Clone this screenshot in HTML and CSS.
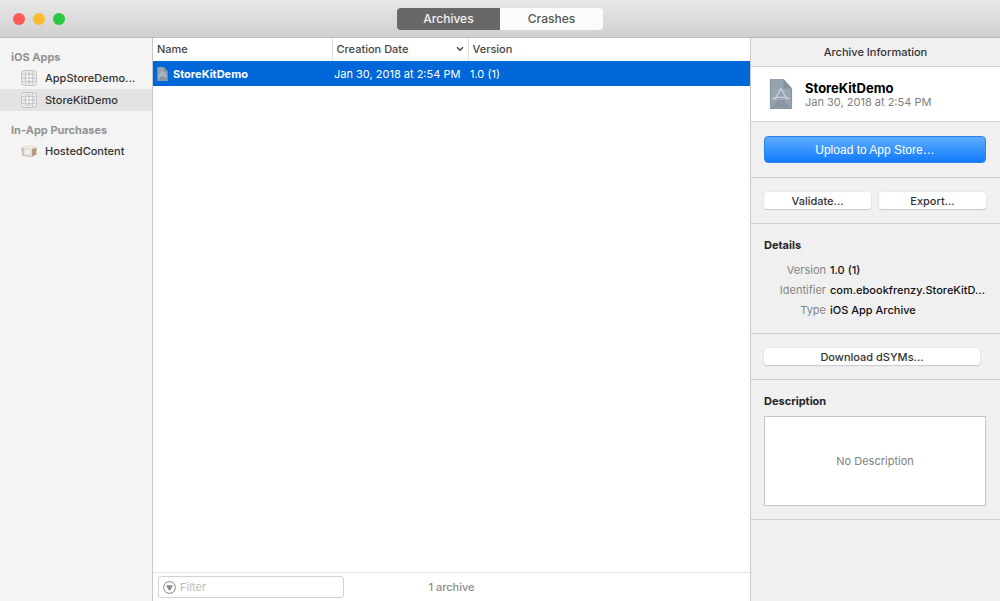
FILE: index.html
```html
<!DOCTYPE html>
<html lang="en">

<head>
    <meta charset="UTF-8">
    <meta name="viewport" content="width=device-width, initial-scale=1.0">
    <title>Archives</title>
    <link rel="stylesheet" href="styles.css">
</head>

<body>

    <!-- shared icons -->
    <svg class="icon-defs" width="0" height="0" aria-hidden="true">
        <symbol id="icon-app" viewBox="0 0 16 16">
            <rect x="0.5" y="0.5" width="15" height="15" rx="3" fill="#ececec" stroke="#c2c2c2" />
            <path d="M4.500 1.500v13M8 1.500v13M11.500 1.500v13M1.500 4.500h13M1.500 8h13M1.500 11.500h13" stroke="#bfbfbf" stroke-width="1" stroke-dasharray="2 0.700" />
            <circle cx="8" cy="8" r="4.500" fill="none" stroke="#cdcdcd" stroke-width="0.800" />
            <path d="M5.500 5.500h1.500v1.500H5.500zM9 5.500h1.500v1.500H9zM5.500 9h1.500v1.500H5.500zM9 9h1.500v1.500H9z" fill="#fafafa" />
        </symbol>
        <symbol id="icon-box" viewBox="0 0 16 12">
            <path d="M0.500 3 5 0.800h6l4.500 2L11 4z" fill="#f3ece3" stroke="#ddd2c6" stroke-width="0.500" />
            <path d="M0.500 3 11 4v7.700L1.500 10.500z" fill="#e6e1db" />
            <path d="M11 4l4.500-1.200V9.500L11 11.700z" fill="#b39c82" />
            <path d="M0.500 3 1.200 10.200l1.300.3V3.200z" fill="#c2b5a7" />
            <path d="M4.500 5.500h4v3.500h-4z" fill="#f6f5f2" />
            <path d="M1.500 10.500 11 11.700" stroke="#b8aa9b" stroke-width="0.700" />
        </symbol>
        <symbol id="icon-archive" viewBox="0 0 22 30">
            <path d="M0 0h13.500L22 9.500V30H0z" fill="#95a2af" />
            <path d="M13.500 0v9.500H22z" fill="#84919e" />
            <path d="M0.400 0v29.600h21.200V10" fill="none" stroke="#808d9a" stroke-width="0.800" />
            <path d="M3 18a8 8 0 0 1 16 0" fill="none" stroke="#acb7c2" stroke-width="0.700" />
            <path d="M11 9.500 5 20.500M11 9.500 17 20.500" fill="none" stroke="#c9d2da" stroke-width="1.500" />
            <path d="M1.500 20c5-2.500 14-2.500 19 0" fill="none" stroke="#c9d2da" stroke-width="1.200" />
            <path d="M0.500 28.500 8 20.500h6l7.500 8" fill="#8995a2" stroke="#a9b5c0" stroke-width="0.700" />
        </symbol>
    </svg>

    <div class="window">

        <header class="titlebar">
            <div class="traffic">
                <button class="light close" aria-label="Close"></button>
                <button class="light minimize" aria-label="Minimize"></button>
                <button class="light maximize" aria-label="Zoom"></button>
            </div>
            <div class="segmented">
                <button class="segment active">Archives</button>
                <button class="segment">Crashes</button>
            </div>
        </header>

        <div class="content">

            <nav class="sidebar">
                <h2>iOS Apps</h2>
                <a href="#"><svg class="app-icon"><use href="#icon-app" /></svg><span>AppStoreDemo...</span></a>
                <a href="#" class="selected"><svg class="app-icon"><use href="#icon-app" /></svg><span>StoreKitDemo</span></a>
                <h2>In-App Purchases</h2>
                <a href="#"><svg class="box-icon"><use href="#icon-box" /></svg><span>HostedContent</span></a>
            </nav>

            <main class="archives">
                <div class="list">
                    <table>
                        <thead>
                            <tr>
                                <th class="col-name">Name</th>
                                <th class="col-date">
                                    <div class="sort">Creation Date
                                        <svg width="8" height="6" viewBox="0 0 8 6"><path d="M1 1.200l3 3 3-3" fill="none" stroke="#444" stroke-width="1.400" /></svg>
                                    </div>
                                </th>
                                <th>Version</th>
                            </tr>
                        </thead>
                        <tbody>
                            <tr>
                                <td>
                                    <div class="archive-name"><svg class="row-icon"><use href="#icon-archive" /></svg>StoreKitDemo</div>
                                </td>
                                <td>Jan 30, 2018 at 2:54 PM</td>
                                <td>1.0 (1)</td>
                            </tr>
                        </tbody>
                    </table>
                </div>
                <footer class="statusbar">
                    <label class="filter">
                        <svg width="13" height="13" viewBox="0 0 13 13">
                            <circle cx="6.500" cy="6.500" r="5.900" fill="none" stroke="#858585" />
                            <path d="M3 4.300h7L7.300 9.300H5.700z" fill="#8c8c8c" />
                        </svg>
                        <input type="text" placeholder="Filter" aria-label="Filter">
                    </label>
                    <span class="count">1 archive</span>
                </footer>
            </main>

            <aside class="inspector">
                <h1>Archive Information</h1>

                <section class="identity">
                    <svg class="archive-icon"><use href="#icon-archive" /></svg>
                    <div>
                        <div class="title">StoreKitDemo</div>
                        <div class="date">Jan 30, 2018 at 2:54 PM</div>
                    </div>
                </section>

                <section>
                    <button class="primary">Upload to App Store…</button>
                </section>

                <section class="pair">
                    <button class="plain">Validate...</button>
                    <button class="plain">Export...</button>
                </section>

                <section class="details">
                    <h3>Details</h3>
                    <dl>
                        <dt>Version</dt>
                        <dd>1.0 (1)</dd>
                        <dt>Identifier</dt>
                        <dd>com.ebookfrenzy.StoreKitD...</dd>
                        <dt>Type</dt>
                        <dd>iOS App Archive</dd>
                    </dl>
                </section>

                <section class="download">
                    <button class="plain">Download dSYMs...</button>
                </section>

                <section class="description">
                    <h3><label for="description">Description</label></h3>
                    <textarea id="description" placeholder="No Description"></textarea>
                </section>
            </aside>

        </div>
    </div>

</body>

</html>
```
FILE: styles.css
```css
* {
    box-sizing: border-box;
}

body {
    margin: 0;
    font-family: Inter, "Liberation Sans", sans-serif;
    font-size: 11px;
    line-height: 14px;
    color: #262626;
}

button,
input,
textarea {
    font: inherit;
    color: inherit;
    margin: 0;
}

h1,
h2,
h3,
dl,
dd {
    margin: 0;
    font-size: 11px;
}

svg {
    display: block;
    flex: none;
}

.icon-defs {
    position: absolute;
}

.window {
    display: flex;
    flex-direction: column;
    height: 100vh;
}

/* title bar */
.titlebar {
    display: grid;
    grid-template-columns: 1fr auto 1fr;
    align-items: center;
    height: 38px;
    padding: 0 13px;
    background: linear-gradient(#e8e8e8, #d0d0d0);
    border-bottom: 1px solid #bcbcbc;
}

.traffic {
    display: flex;
    gap: 8px;
}

.light {
    width: 12px;
    height: 12px;
    padding: 0;
    border: 0;
    border-radius: 50%;
}

.close {
    background: #fc5b57;
}

.minimize {
    background: #fdbc2e;
}

.maximize {
    background: #28c840;
}

.segmented {
    display: flex;
    border-radius: 4px;
    overflow: hidden;
}

.segment {
    width: 103px;
    height: 22px;
    padding: 0;
    border: 0;
    background: #fbfbfb;
    color: #555;
    font-size: 12px;
    font-weight: 500;
}

.segment.active {
    background: #686868;
    color: #f2f2f2;
}

.content {
    display: flex;
    flex: 1;
    min-height: 0;
}

/* sidebar */
.sidebar {
    width: 153px;
    padding-top: 9px;
    background: #f4f4f4;
    border-right: 1px solid #c8c8c8;
}

.sidebar h2 {
    padding-left: 11px;
    line-height: 20px;
    font-weight: 700;
    color: #929292;
}

.sidebar a + h2 {
    margin-top: 9px;
}

.sidebar a {
    display: flex;
    align-items: center;
    gap: 8px;
    height: 22px;
    padding-left: 21px;
    color: #333;
    font-weight: 500;
    text-decoration: none;
    white-space: nowrap;
}

.sidebar a.selected {
    background: #e3e3e3;
}

.app-icon {
    width: 16px;
    height: 16px;
}

.box-icon {
    width: 16px;
    height: 12px;
}

/* archive list */
.archives {
    display: flex;
    flex-direction: column;
    flex: 1;
    min-width: 0;
    background: #fff;
}

.list {
    flex: 1;
}

table {
    width: 100%;
    table-layout: fixed;
    border-collapse: collapse;
}

th,
td {
    padding: 0;
    text-align: left;
    white-space: nowrap;
}

th {
    height: 23px;
    padding: 0 4px 1px;
    font-weight: 500;
    color: #444;
}

th + th {
    border-left: 1px solid #dedede;
}

.col-name {
    width: 179px;
}

.col-date {
    width: 136px;
}

.sort {
    display: flex;
    align-items: center;
    justify-content: space-between;
}

td {
    height: 25px;
    padding-left: 2px;
    background: #0067d9;
    color: #fff;
}

.archive-name {
    display: flex;
    align-items: center;
    gap: 5px;
    padding-left: 2px;
    font-weight: 700;
}

.row-icon {
    width: 11px;
    height: 14px;
}

.statusbar {
    display: grid;
    grid-template-columns: 1fr auto 1fr;
    align-items: center;
    height: 29px;
    padding: 0 5px;
    border-top: 1px solid #e4e4e4;
    color: #8c8c8c;
}

.count {
    font-weight: 500;
}

.filter {
    display: flex;
    align-items: center;
    gap: 4px;
    width: 186px;
    height: 22px;
    padding: 0 4px;
    border: 1px solid #d2d2d2;
    border-radius: 3px;
}

.filter input {
    flex: 1;
    min-width: 0;
    padding: 0;
    border: 0;
    outline: none;
    background: none;
}

.filter input::placeholder {
    color: #bbb;
}

/* inspector */
.inspector {
    width: 250px;
    background: #f0f0f0;
    border-left: 1px solid #c8c8c8;
}

.inspector h1 {
    height: 29px;
    line-height: 28px;
    border-bottom: 1px solid #d0d0d0;
    text-align: center;
    font-weight: 500;
    color: #333;
}

.inspector section {
    padding: 14px 14px 14px 13px;
    border-bottom: 1px solid #d0d0d0;
}

.inspector .identity {
    display: flex;
    align-items: center;
    gap: 12px;
    height: 55px;
    padding: 0 18px;
    background: #fff;
}

.archive-icon {
    width: 24px;
    height: 30px;
}

.identity .title {
    padding-top: 1px;
    font-size: 13px;
    font-weight: 700;
    color: #000;
}

.date {
    color: #808080;
}

.primary {
    display: block;
    width: 100%;
    height: 27px;
    padding: 0;
    border: 1px solid #2a82f0;
    border-radius: 4px;
    background: linear-gradient(#5eadfc, #127afc);
    color: #fff;
    font-family: "Liberation Sans", sans-serif;
    font-size: 12px;
}

.pair {
    display: flex;
    gap: 8px;
}

.plain {
    display: block;
    width: 100%;
    height: 17px;
    padding: 0;
    border: 0;
    border-radius: 3px;
    background: #fff;
    box-shadow: 0 0 1px #bbb, 0 1px 1px #ccc;
    color: #333;
    font-weight: 500;
}

.inspector .download {
    padding-right: 20px;
}

.inspector .details {
    padding-bottom: 13px;
}

.inspector .description {
    padding-bottom: 13px;
}

h3 {
    font-weight: 700;
}

dl {
    display: grid;
    grid-template-columns: 62px 1fr;
    column-gap: 4px;
    margin-top: 8px;
    line-height: 20px;
}

dt {
    text-align: right;
    color: #858585;
}

dd {
    font-weight: 500;
    color: #111;
    white-space: nowrap;
}

textarea {
    display: block;
    width: 100%;
    height: 90px;
    margin-top: 8px;
    padding: 37px 4px 0;
    border: 1px solid #c6c6c6;
    background: #fff;
    text-align: center;
    resize: none;
}

textarea::placeholder {
    color: #808080;
}
```
